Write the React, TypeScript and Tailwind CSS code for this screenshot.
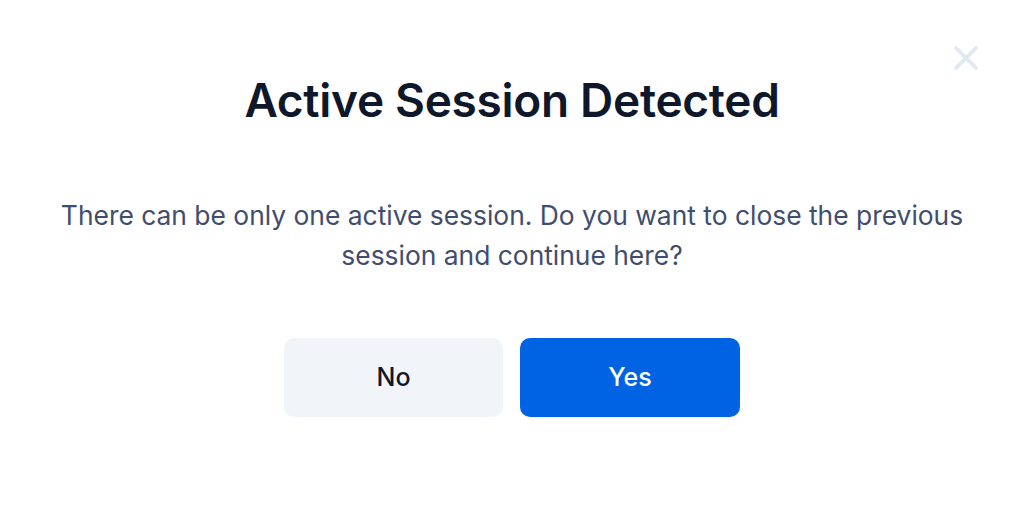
import { X } from "lucide-react";

export default function App() {
  return (
    <div
      className="relative w-full h-[516px] bg-white flex flex-col items-center"
      style={{ fontFamily: "Inter, 'Noto Sans', sans-serif" }}
    >
      {/* Close */}
      <button className="absolute top-[38px] right-[38px] text-[#e2e8f0]">
        <X className="w-[40px] h-[40px]" strokeWidth={2.3} />
      </button>

      <h1 className="mt-[70px] text-[46px] leading-[60px] font-semibold text-[#0f172a] tracking-[-0.3px]">
        Active Session Detected
      </h1>

      <p className="mt-[65px] w-[930px] text-center text-[26.4px] leading-[40px] text-[#3f4d6e]">
        There can be only one active session. Do you want to close the previous
        session and continue here?
      </p>

      <div className="mt-[63px] flex gap-[17px]">
        <button className="w-[219px] h-[79px] rounded-[10px] bg-[#f1f4f9] text-[#0f172a] text-[25px] font-medium">
          No
        </button>
        <button className="w-[220px] h-[79px] rounded-[10px] bg-[#0063e3] text-white text-[25px] font-medium">
          Yes
        </button>
      </div>
    </div>
  );
}
